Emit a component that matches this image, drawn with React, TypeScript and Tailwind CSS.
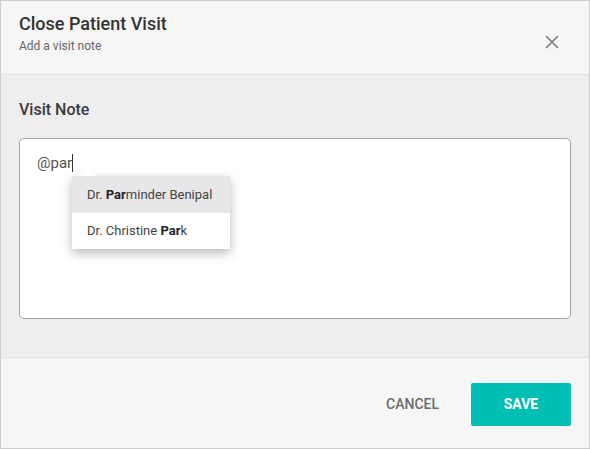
import React from "react";

export default function App() {
  return (
    <div className="w-[590px] h-[449px] border border-[#cdcdcd] flex flex-col bg-white" style={{ fontFamily: "Roboto, 'Liberation Sans', sans-serif" }}>
      <div className="h-[74px] shrink-0 bg-[#f6f6f6] border-b border-[#e2e2e2] flex items-start justify-between pl-[18px] pr-[30px]">
        <div className="pt-[12px]">
          <div className="text-[18px] leading-[22px] font-medium text-[#333333]">Close Patient Visit</div>
          <div className="text-[12px] leading-[16px] text-[#666666] mt-[3px]">Add a visit note</div>
        </div>
        <button className="mt-[34px] text-[#7a7a7a]">
          <svg width="14" height="14" viewBox="0 0 14 14" fill="none" stroke="currentColor" strokeWidth="1.6">
            <path d="M1 1L13 13M13 1L1 13" />
          </svg>
        </button>
      </div>
      <div className="h-[282px] shrink-0 bg-[#eeeeee] px-[18px] pt-[24px]">
        <div className="text-[16px] leading-[22px] font-medium text-[#3a3a3a]">Visit Note</div>
        <div className="relative mt-[17px] h-[181px] bg-white border border-[#a3a3a3] rounded-[5px] px-[17px] pt-[14px]">
          <div className="text-[15px] leading-[20px] text-[#555555] flex items-center">
            @par<span className="inline-block w-[1px] h-[18px] bg-[#333333]" />
          </div>
          <div className="absolute left-[52px] top-[37px] w-[158px] bg-white shadow-[0_4px_10px_rgba(0,0,0,0.28)]">
            <div className="absolute -top-[8px] left-[8px] w-0 h-0 border-l-[8px] border-r-[8px] border-b-[8px] border-l-transparent border-r-transparent border-b-white" />
            <div className="h-[37px] bg-[#e7e7e9] flex items-center pl-[15px] text-[13px] text-[#444444]">
              Dr.&nbsp;<b className="font-bold text-[#222222]">Par</b>minder Benipal
            </div>
            <div className="h-[36px] flex items-center pl-[15px] text-[13px] text-[#444444]">
              Dr. Christine&nbsp;<b className="font-bold text-[#222222]">Par</b>k
            </div>
          </div>
        </div>
      </div>
      <div className="flex-1 bg-[#f6f6f6] border-t border-[#e2e2e2] flex items-center justify-end pr-[18px] pt-[2px]">
        <button className="text-[14px] font-medium text-[#6b6b6b] mr-[32px]">CANCEL</button>
        <button className="w-[100px] h-[43px] bg-[#00bfb3] rounded-[2px] text-white text-[14px] font-bold">SAVE</button>
      </div>
    </div>
  );
}
